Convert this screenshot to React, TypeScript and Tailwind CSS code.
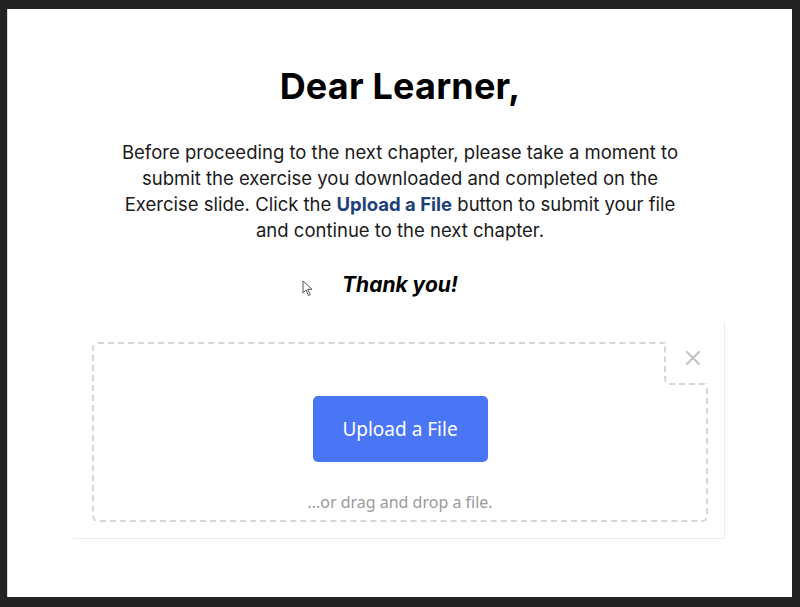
import React from 'react'

const CursorIcon = () => (
  <svg width="12" height="17" viewBox="0 0 12 17" className="absolute left-[294px] top-[271px]">
    <path d="M1 1 L1 13 L4 10 L6.5 15.5 L8.3 14.7 L5.8 9.3 L10 9.3 Z" fill="#fff" stroke="#555" strokeWidth="1" strokeLinejoin="round" />
  </svg>
)

export default function App() {
  return (
    <div className="h-[607px] w-[800px] bg-[#232323] pt-[9px] pb-[10px] pl-[7px] pr-[8px]">
      <div className="relative h-full border-l border-[#d8d8d8] bg-white font-['Inter',sans-serif]">
        <h1 className="pt-[55px] text-center text-[36px] font-bold leading-[44px] tracking-[0.2px] text-black">
          Dear Learner,
        </h1>

        <p className="mt-[31px] text-center text-[18.5px] leading-[26px] text-[#1a1a1a]">
          Before proceeding to the next chapter, please take a moment to
          <br />
          submit the exercise you downloaded and completed on the
          <br />
          Exercise slide. Click the <span className="font-bold text-[#1f3f7a]">Upload a File</span> button to submit your file
          <br />
          and continue to the next chapter.
        </p>

        <p className="mt-[28px] text-center text-[21px] font-bold italic leading-[28px] text-black">
          Thank you!
        </p>

        <CursorIcon />

        <div className="ml-[65px] mt-[24px] w-[652px] border-r border-b border-[#ececec] pt-[19px] pb-[16px] pl-[19px] pr-[16px]">
          <div className="relative flex h-[180px] flex-col items-center rounded-[6px] border-2 border-dashed border-[#d6d6d6] pt-[52px]">
            <div className="absolute -right-[2px] -top-[2px] h-[43px] w-[44px] rounded-bl-[6px] border-b-2 border-l-2 border-dashed border-[#d6d6d6] bg-white">
              <button className="absolute left-[18px] top-[7px] flex h-[18px] w-[18px] items-center justify-center text-[#c4c4c4]">
                <svg width="16" height="16" viewBox="0 0 16 16">
                  <path d="M2 2 L14 14 M14 2 L2 14" stroke="currentColor" strokeWidth="2.2" strokeLinecap="round" />
                </svg>
              </button>
            </div>
            <button className="h-[66px] w-[175px] rounded-[5px] bg-[#4a76f6] font-['Noto_Sans',sans-serif] text-[19px] text-white">
              Upload a File
            </button>
            <div className="mt-[28px] font-['Noto_Sans',sans-serif] text-[16px] text-[#9a9a9a]">
              ...or drag and drop a file.
            </div>
          </div>
        </div>
      </div>
    </div>
  )
}
